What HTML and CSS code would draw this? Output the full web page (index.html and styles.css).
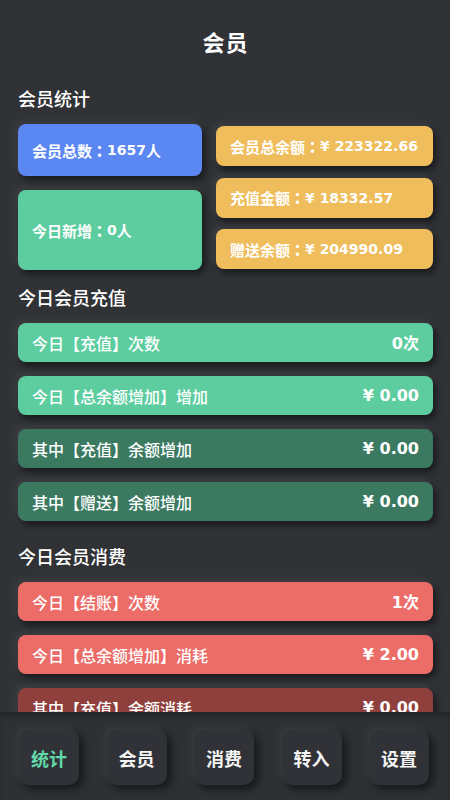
FILE: index.html
```html
<!DOCTYPE html>
<html lang="zh-CN">
<head>
<meta charset="utf-8">
<title>会员</title>
<link rel="stylesheet" href="styles.css">
</head>
<body>
<div class="app">
  <main class="content">
    <header class="title">会员</header>

    <section class="section">
      <h2 class="section-title">会员统计</h2>
      <div class="stats">
        <div class="stats-left">
          <div class="card blue card-small"><span>会员总数</span><span class="colon">：</span><span class="num">1657</span><span>人</span></div>
          <div class="card green card-large"><span>今日新增</span><span class="colon">：</span><span class="num">0</span><span>人</span></div>
        </div>
        <div class="stats-right">
          <div class="card yellow"><span>会员总余额</span><span class="colon">：</span><span class="num">¥ 223322.66</span></div>
          <div class="card yellow"><span>充值金额</span><span class="colon">：</span><span class="num">¥ 18332.57</span></div>
          <div class="card yellow"><span>赠送余额</span><span class="colon">：</span><span class="num">¥ 204990.09</span></div>
        </div>
      </div>
    </section>

    <section class="section">
      <h2 class="section-title">今日会员充值</h2>
      <div class="rows">
        <div class="row green"><span class="label">今日【充值】次数</span><span class="value"><span class="num">0</span>次</span></div>
        <div class="row green"><span class="label">今日【总余额增加】增加</span><span class="value num">¥ 0.00</span></div>
        <div class="row dark-green"><span class="label">其中【充值】余额增加</span><span class="value num">¥ 0.00</span></div>
        <div class="row dark-green"><span class="label">其中【赠送】余额增加</span><span class="value num">¥ 0.00</span></div>
      </div>
    </section>

    <section class="section section-last">
      <h2 class="section-title">今日会员消费</h2>
      <div class="rows">
        <div class="row red"><span class="label">今日【结账】次数</span><span class="value"><span class="num">1</span>次</span></div>
        <div class="row red"><span class="label">今日【总余额增加】消耗</span><span class="value num">¥ 2.00</span></div>
        <div class="row dark-red"><span class="label">其中【充值】余额消耗</span><span class="value num">¥ 0.00</span></div>
        <div class="row dark-red"><span class="label">其中【赠送】余额消耗</span><span class="value num">¥ 2.00</span></div>
      </div>
    </section>
  </main>

  <nav class="tabbar">
    <div class="tab active">统计</div>
    <div class="tab">会员</div>
    <div class="tab">消费</div>
    <div class="tab">转入</div>
    <div class="tab">设置</div>
  </nav>
</div>
</body>
</html>
```

FILE: styles.css
```css
* {
  box-sizing: border-box;
}

html, body {
  margin: 0;
  padding: 0;
  background: #303236;
}

body {
  font-family: "Noto Sans CJK SC", "Noto Sans", sans-serif;
  color: #ffffff;
}

.app {
  width: 450px;
  height: 800px;
  display: flex;
  flex-direction: column;
  overflow: hidden;
}

.content {
  flex: 1;
  overflow: hidden;
  padding: 26px 17px 0 18px;
}

.title {
  height: 30px;
  line-height: 30px;
  text-align: center;
  font-size: 22px;
  font-weight: 700;
  letter-spacing: 1px;
}

.section {
  margin-top: 14px;
}

.section:first-of-type {
  margin-top: 29px;
}

.section-last {
  margin-top: 22px;
}

.section-title {
  margin: 0 0 13px 0;
  height: 26px;
  line-height: 26px;
  font-size: 18px;
  font-weight: 500;
}

.stats {
  display: grid;
  grid-template-columns: 184px 1fr;
  column-gap: 14px;
}

.stats-left {
  display: flex;
  flex-direction: column;
  gap: 14px;
  height: 146px;
}

.stats-right {
  display: flex;
  flex-direction: column;
  gap: 11.5px;
  padding-top: 2px;
}

.card {
  display: flex;
  align-items: center;
  padding: 0 14px;
  border-radius: 8px;
  font-size: 15px;
  font-weight: 700;
  box-shadow: -3px -3px 7px rgba(255, 255, 255, 0.07), 3px 4px 7px rgba(0, 0, 0, 0.5);
  white-space: nowrap;
}

.card-small {
  height: 52px;
}

.card-large {
  flex: 1;
}

.stats-right .card {
  height: 40px;
}

.colon {
  display: inline-block;
  width: 15px;
  text-align: center;
  font-family: "Noto Sans CJK JP", sans-serif;
  font-weight: 900;
}

.num {
  font-family: "DejaVu Sans", sans-serif;
  font-weight: 700;
}

.card .num {
  font-size: 14px;
}

.blue {
  background: #5b87f3;
}

.green {
  background: #5dcd9f;
}

.yellow {
  background: #efbd5b;
}

.dark-green {
  background: #3b7a61;
}

.red {
  background: #ec6c68;
}

.dark-red {
  background: #8f403d;
}

.rows {
  display: flex;
  flex-direction: column;
  gap: 14px;
}

.row {
  height: 39px;
  display: flex;
  align-items: center;
  justify-content: space-between;
  padding: 0 14px;
  border-radius: 8px;
  box-shadow: -3px -3px 7px rgba(255, 255, 255, 0.07), 3px 4px 7px rgba(0, 0, 0, 0.5);
}

.label {
  font-size: 16px;
  font-weight: 500;
  line-height: 20px;
}

.value {
  font-size: 16px;
  font-weight: 700;
  line-height: 20px;
}

.value.num {
  font-size: 16px;
}

.tabbar {
  height: 88px;
  flex: none;
  display: flex;
  justify-content: space-between;
  padding: 18px 21px 0 19px;
  background: #2e3034;
  box-shadow: inset 0 5px 6px -2px rgba(0, 0, 0, 0.3);
}

.tab {
  width: 60px;
  height: 55px;
  border-radius: 10px;
  background: #303237;
  display: flex;
  align-items: center;
  justify-content: center;
  font-size: 18px;
  font-weight: 700;
  color: #f4f4f4;
  box-shadow: -3px -3px 6px rgba(255, 255, 255, 0.06), 4px 4px 8px rgba(0, 0, 0, 0.55);
}

.tab.active {
  color: #62d9a8;
}
```
